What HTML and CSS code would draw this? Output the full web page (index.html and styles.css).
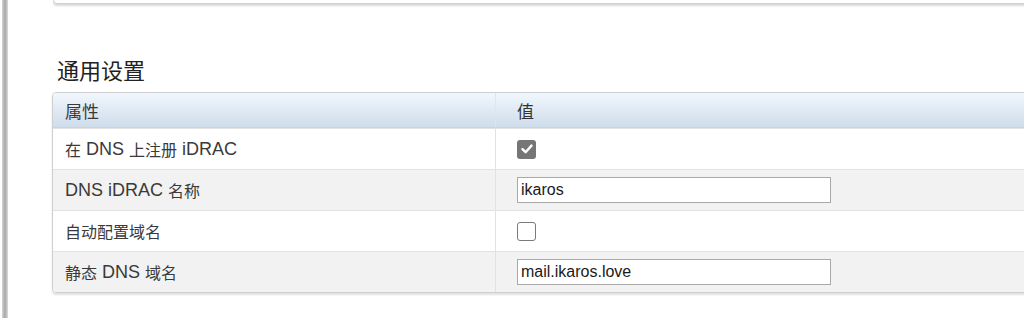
FILE: index.html
```html
<!DOCTYPE html>
<html lang="zh-CN">
<head>
    <meta charset="UTF-8">
    <title>通用设置</title>
    <link rel="stylesheet" href="styles.css">
</head>
<body>
    <div class="page">
        <div class="side-bar"></div>
        <div class="content">
            <div class="top-panel"></div>

            <h2 class="section-title">通用设置</h2>

            <div class="settings-table">
                <div class="row header-row">
                    <div class="cell name"><span class="zh">属性</span></div>
                    <div class="cell value"><span class="zh">值</span></div>
                </div>
                <div class="row">
                    <div class="cell name"><span class="zh">在</span>&nbsp;DNS&nbsp;<span class="zh">上注册</span>&nbsp;iDRAC</div>
                    <div class="cell value">
                        <span class="checkbox checked">
                            <svg width="14" height="14" viewBox="0 0 14 14"><path d="M2.5 7.2 L5.6 10.2 L11.5 3.6" fill="none" stroke="#fff" stroke-width="2.4" stroke-linecap="round" stroke-linejoin="round"/></svg>
                        </span>
                    </div>
                </div>
                <div class="row alt">
                    <div class="cell name">DNS iDRAC&nbsp;<span class="zh">名称</span></div>
                    <div class="cell value">
                        <input class="text-input" type="text" value="ikaros">
                    </div>
                </div>
                <div class="row">
                    <div class="cell name"><span class="zh">自动配置域名</span></div>
                    <div class="cell value">
                        <span class="checkbox"></span>
                    </div>
                </div>
                <div class="row alt">
                    <div class="cell name"><span class="zh">静态</span>&nbsp;DNS&nbsp;<span class="zh">域名</span></div>
                    <div class="cell value">
                        <input class="text-input" type="text" value="mail.ikaros.love">
                    </div>
                </div>
            </div>
        </div>
    </div>
</body>
</html>
```
FILE: styles.css
```css
body {
    margin: 0;
    background-color: #ffffff;
    font-family: "Liberation Sans", Arial, "Noto Sans CJK SC", sans-serif;
    color: #333333;
    overflow: hidden;
}

.page {
    display: flex;
    height: 318px;
}

.side-bar {
    width: 6px;
    margin-left: 2px;
    background: linear-gradient(to right, #d4d4d4, #a8a8a8 50%, #dcdcdc);
    flex-shrink: 0;
}

.content {
    flex: 1;
    padding-left: 44px;
    min-width: 0;
}

.top-panel {
    height: 3px;
    margin-left: 1px;
    margin-right: -20px;
    border-left: 1px solid #d0d0d0;
    border-bottom: 1px solid #d0d0d0;
    border-bottom-left-radius: 4px;
    box-shadow: 0 2px 2px rgba(0, 0, 0, 0.15);
}

.section-title {
    margin: 52px 0 10px 5px;
    font-family: "Noto Sans CJK SC", sans-serif;
    font-size: 22px;
    font-weight: normal;
    line-height: 26px;
    color: #222222;
}

.settings-table {
    margin-right: -30px;
    border: 1px solid #cfcfcf;
    border-radius: 4px;
    box-shadow: 0 2px 2px rgba(0, 0, 0, 0.12);
    overflow: hidden;
}

.row {
    display: flex;
    height: 40px;
    border-top: 1px solid #e2e2e2;
    background-color: #ffffff;
}

.row.alt {
    background-color: #f2f2f2;
}

.header-row {
    height: 34px;
    border-top: none;
    border-bottom: 1px solid #c6d3e1;
    background: linear-gradient(to bottom, #f1f7fe, #cfdcea);
}

.cell {
    display: flex;
    align-items: center;
    font-size: 18px;
    white-space: nowrap;
}

.zh {
    font-family: "Noto Sans CJK SC", sans-serif;
    font-size: 16px;
}

.cell.name {
    width: 430px;
    padding-left: 12px;
    border-right: 1px solid #e2e2e2;
    color: #3a3a3a;
}

.header-row .cell.name {
    border-right-color: #dde6ef;
}

.header-row .zh {
    font-size: 17px;
}

.cell.value {
    flex: 1;
    padding-left: 21px;
}

.checkbox {
    display: inline-flex;
    align-items: center;
    justify-content: center;
    width: 17px;
    height: 17px;
    border: 1px solid #7a7a7a;
    border-radius: 3px;
    background-color: #ffffff;
}

.checkbox.checked {
    width: 19px;
    height: 19px;
    border: none;
    background-color: #767676;
}

.text-input {
    box-sizing: border-box;
    width: 314px;
    height: 26px;
    padding: 0 3px;
    border: 1px solid #a9a9a9;
    border-radius: 0;
    background-color: #ffffff;
    font-family: "Liberation Sans", Arial, sans-serif;
    font-size: 16px;
    color: #1a1a1a;
    outline: none;
}
```
